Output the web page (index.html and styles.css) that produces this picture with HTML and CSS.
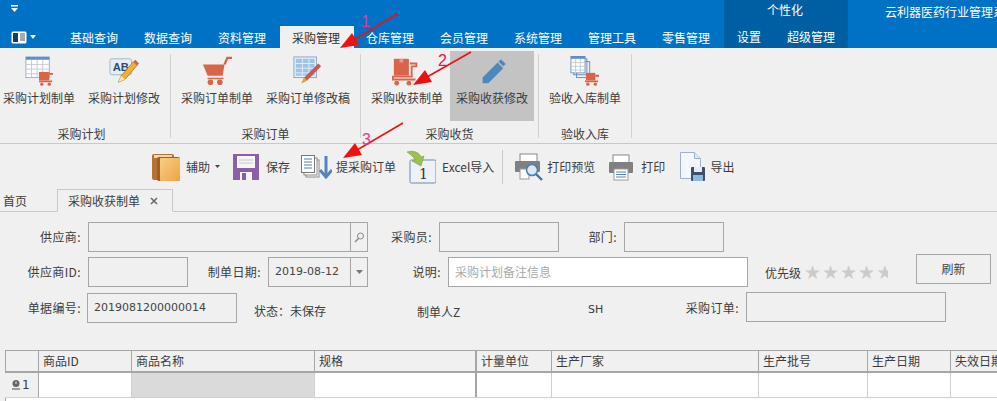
FILE: index.html
```html
<!DOCTYPE html>
<html lang="zh">
<head>
<meta charset="utf-8">
<title>采购收获制单</title>
<link rel="stylesheet" href="styles.css">
</head>
<body>
<div class="page">
  <header class="topbar">
    <div class="top-left">
      <div class="qat">
        <svg width="10" height="8" viewBox="0 0 10 8"><rect x="1" y="0" width="7" height="1.5" fill="#fff"/><path d="M1 3h7L4.5 7z" fill="#fff"/></svg>
      </div>
      <nav class="tabs">
        <div class="filemenu">
          <svg width="16" height="13" viewBox="0 0 16 13"><rect x="0.5" y="0.5" width="15" height="12" rx="1.5" fill="#fff"/><rect x="2" y="2" width="5" height="9" fill="#0f3f6b"/><path d="M9 3h5M9 5h5M9 7h5M9 9h5" stroke="#555" stroke-width="1"/></svg>
          <svg class="caret" width="6" height="4" viewBox="0 0 6 4"><path d="M0 0h6L3 4z" fill="#fff"/></svg>
        </div>
        <span class="tab">基础查询</span>
        <span class="tab">数据查询</span>
        <span class="tab">资料管理</span>
        <span class="tab active">采购管理</span>
        <span class="tab">仓库管理</span>
        <span class="tab">会员管理</span>
        <span class="tab">系统管理</span>
        <span class="tab">管理工具</span>
        <span class="tab">零售管理</span>
      </nav>
    </div>
    <div class="context">
      <div class="context-title">个性化</div>
      <div class="context-tabs"><span>设置</span><span>超级管理</span></div>
    </div>
    <div class="app-title">云利器医药行业管理系统</div>
  </header>

  <section class="ribbon">
    <div class="group first">
      <div class="group-btns">
        <div class="rbtn">
          <svg class="ricon" width="32" height="30" viewBox="0 0 32 32"><rect x="2" y="1" width="25" height="22" fill="#fff" stroke="#8fb0d4"/><rect x="2" y="1" width="25" height="3" fill="#5b8fc7"/><path d="M2 9h25M2 14h25M2 19h25M8 4v19M14 4v19M20 4v19" stroke="#c9c9c9"/><rect x="16" y="17" width="11" height="9" fill="#d9644a"/><path d="M27 19h4M16 27h14" stroke="#d9644a" stroke-width="2"/><circle cx="19" cy="30" r="1.8" fill="#d9644a"/><circle cx="27" cy="30" r="1.8" fill="#d9644a"/></svg>
          <span class="rlabel">采购计划制单</span>
        </div>
        <div class="rbtn">
          <svg class="ricon" width="32" height="30" viewBox="0 0 32 32"><rect x="1" y="3" width="23" height="17" rx="2" fill="#e8edf5" stroke="#9fb2cc"/><text class="ab" x="4" y="16">AB</text><path d="M10 28l3-7L26 6l4 4L17 25z" fill="#f0b232" stroke="#8a6a2a" stroke-width=".7"/><path d="M26 6l2-2 4 4-2 2z" fill="#d85c4a"/><path d="M10 28l3-7 4 4z" fill="#f5dfb5"/></svg>
          <span class="rlabel">采购计划修改</span>
        </div>
      </div>
      <div class="group-title">采购计划</div>
    </div>
    <div class="group">
      <div class="group-btns">
        <div class="rbtn">
          <svg class="ricon" width="32" height="30" viewBox="0 0 32 32"><path d="M1 9h23l-2 12H6z" fill="#d9644a"/><path d="M24 9l3-7h5" fill="none" stroke="#d9644a" stroke-width="2.4"/><path d="M6 24h17" stroke="#d9644a" stroke-width="1.6"/><circle cx="9" cy="28" r="3" fill="#d9644a"/><circle cx="19" cy="28" r="3" fill="#d9644a"/></svg>
          <span class="rlabel">采购订单制单</span>
        </div>
        <div class="rbtn">
          <svg class="ricon" width="32" height="30" viewBox="0 0 32 32"><rect x="1" y="1" width="24" height="22" fill="#e9eef6" stroke="#8da3bf"/><rect x="3" y="3" width="20" height="18" fill="#9dc3e6"/><path d="M3 8h20M3 13h20M3 18h20M10 3v18M17 3v18" stroke="#e5eef8"/><path d="M9 29l3-6L27 8l3 3-15 15z" fill="#c9574f"/><path d="M9 29l3-6 3 3z" fill="#d8a94c"/></svg>
          <span class="rlabel">采购订单修改稿</span>
        </div>
      </div>
      <div class="group-title">采购订单</div>
    </div>
    <div class="group">
      <div class="group-btns">
        <div class="rbtn">
          <svg class="ricon" width="32" height="30" viewBox="0 0 32 32"><rect x="2" y="3" width="16" height="18" fill="#d9644a"/><rect x="8" y="3" width="4" height="4" fill="#eb9a85"/><path d="M19 8h7v3h-5v11H1v3h24" fill="none" stroke="#d9644a" stroke-width="2"/><circle cx="5" cy="29" r="2.5" fill="#d9644a"/><circle cx="18" cy="29" r="2.5" fill="#d9644a"/></svg>
          <span class="rlabel">采购收获制单</span>
        </div>
        <div class="rbtn selected">
          <svg class="ricon" width="32" height="30" viewBox="0 0 32 32"><path d="M6 29v-6L22 7l6 6-16 16z" fill="#4f86bd"/><path d="M23 6l2.500-2.500 5 5L28 11z" fill="#4f86bd"/></svg>
          <span class="rlabel">采购收获修改</span>
        </div>
      </div>
      <div class="group-title">采购收货</div>
    </div>
    <div class="group">
      <div class="group-btns">
        <div class="rbtn">
          <svg class="ricon" width="32" height="30" viewBox="0 0 32 32"><rect x="7" y="6" width="14" height="17" fill="none" stroke="#5b8fc7"/><rect x="4" y="3" width="14" height="17" fill="none" stroke="#5b8fc7"/><rect x="1" y="0" width="15" height="18" fill="#fff" stroke="#6f94bd"/><rect x="1" y="0" width="15" height="3" fill="#5b8fc7"/><path d="M1 7h15M1 11h15M1 15h15M6 3v15M11 3v15" stroke="#c9c9c9"/><rect x="17" y="18" width="10" height="8" fill="#d9644a"/><path d="M27 21h4M16 27h14" stroke="#d9644a" stroke-width="2"/><circle cx="19" cy="30" r="1.8" fill="#d9644a"/><circle cx="27" cy="30" r="1.8" fill="#d9644a"/></svg>
          <span class="rlabel">验收入库制单</span>
        </div>
      </div>
      <div class="group-title">验收入库</div>
    </div>
  </section>

  <section class="toolbar">
    <div class="tool t-help">
      <svg width="28" height="28" viewBox="0 0 28 28"><defs><linearGradient id="bk" x1="0" y1="0" x2="1" y2="1"><stop offset="0" stop-color="#f7cf86"/><stop offset="1" stop-color="#eda444"/></linearGradient></defs><rect x="0" y="1" width="22" height="26" rx="2" fill="#b5713a"/><rect x="2" y="2" width="18" height="3" fill="#f0d7a8"/><rect x="5" y="4" width="23" height="24" rx="2" fill="#a75c22"/><rect x="8" y="5" width="20" height="23" rx="1" fill="url(#bk)"/></svg>
      <span>辅助</span>
      <svg class="tcaret" width="5" height="3" viewBox="0 0 5 3"><path d="M0 0h5L2.500 3z" fill="#444"/></svg>
    </div>
    <div class="tool t-save">
      <svg width="26" height="26" viewBox="0 0 26 26"><path d="M0 0h26v26H0z" fill="#8a5fa8"/><rect x="4" y="2" width="18" height="12" fill="#f5f5f5"/><path d="M6 6h14M6 9h14" stroke="#c8c8c8"/><rect x="7" y="18" width="12" height="8" fill="#f5f5f5"/><rect x="9" y="19" width="4" height="7" fill="#8a5fa8"/></svg>
      <span>保存</span>
    </div>
    <div class="tool t-pull">
      <svg width="31" height="24" viewBox="0 0 31 24"><rect x="5" y="5" width="13" height="17" fill="#fff" stroke="#888"/><rect x="3" y="3" width="13" height="17" fill="#fff" stroke="#888"/><rect x="0.500" y="0.500" width="13" height="17" fill="#fff" stroke="#777"/><path d="M3 4h8M3 7h8M3 10h8M3 13h8" stroke="#4f7fb0"/><path d="M25 1v19" stroke="#4f86bd" stroke-width="3"/><path d="M19 15l6 7 6-7" fill="none" stroke="#4f86bd" stroke-width="3"/></svg>
      <span>提采购订单</span>
    </div>
    <div class="tool t-excel">
      <svg width="29" height="34" viewBox="0 0 29 34"><rect x="3" y="10" width="26" height="23" rx="1.500" fill="#eef2f8" stroke="#6f86b0"/><text class="one" x="12" y="29">1</text><path d="M0 2c6-2 12 0 14 5l3-1-3 10-9-5 3-1C7 7 4 5 0 2z" fill="#9cc24e" stroke="#6f8f2f" stroke-width=".5"/></svg>
      <span class="latin">Excel导入</span>
    </div>
    <div class="tsep"></div>
    <div class="tool t-preview">
      <svg width="28" height="28" viewBox="0 0 28 28"><rect x="5" y="1" width="17" height="8" fill="#fff" stroke="#888"/><rect x="0" y="8" width="25" height="11" rx="1" fill="#808080"/><rect x="5" y="16" width="9" height="10" fill="#fff" stroke="#999"/><circle cx="17" cy="17" r="5.500" fill="#dfe8f2" stroke="#4a7fb0" stroke-width="1.600"/><path d="M21 21l6 6" stroke="#3f76ad" stroke-width="2.400"/></svg>
      <span>打印预览</span>
    </div>
    <div class="tool t-print">
      <svg width="24" height="27" viewBox="0 0 24 27"><rect x="4" y="1" width="16" height="8" fill="#fff" stroke="#888"/><rect x="0" y="8" width="24" height="11" rx="1" fill="#808080"/><rect x="5" y="15" width="14" height="11" fill="#fff" stroke="#999"/><path d="M7 18h10M7 20.500h10M7 23h10" stroke="#4f86bd"/></svg>
      <span>打印</span>
    </div>
    <div class="tool t-export">
      <svg width="25" height="30" viewBox="0 0 25 30"><path d="M0.500 0.500h14l6 6v20h-20z" fill="#f4f6fb" stroke="#9fb0cc"/><path d="M14.500.5v6h6" fill="#dfe6f2" stroke="#9fb0cc"/><rect x="11" y="15" width="14" height="14" rx="1" fill="#3f4f6b"/><rect x="14" y="15" width="8" height="5" fill="#e8edf5"/><rect x="13" y="23" width="10" height="6" fill="#8fb8de"/></svg>
      <span>导出</span>
    </div>
  </section>

  <section class="doctabs">
    <span class="doctab-home">首页</span>
    <div class="doctab">
      <span>采购收获制单</span>
      <svg width="8" height="8" viewBox="0 0 8 8"><path d="M1 1l6 6M7 1L1 7" stroke="#666" stroke-width="1.500"/></svg>
    </div>
  </section>

  <section class="form">
    <div class="frow r1">
      <label class="lb w81">供应商:</label>
      <div class="input w280 combo"><i></i><b class="addon">
        <svg width="11" height="11" viewBox="0 0 11 11"><circle cx="6.500" cy="4" r="3" fill="none" stroke="#888"/><path d="M4.500 6.500L1 10" stroke="#888" stroke-width="1.500"/></svg></b></div>
      <label class="lb w64">采购员:</label>
      <div class="input w120"></div>
      <label class="lb w58">部门:</label>
      <div class="input w100"></div>
    </div>
    <div class="frow r2">
      <label class="lb w81">供应商ID:</label>
      <div class="input w100"></div>
      <label class="lb w73">制单日期:</label>
      <div class="input w100 combo"><i class="num">2019-08-12</i><b class="addon">
        <svg width="7" height="4" viewBox="0 0 7 4"><path d="M0 0h7L3.500 4z" fill="#777"/></svg></b></div>
      <label class="lb w73">说明:</label>
      <div class="input w300 white">采购计划备注信息</div>
      <span class="prio">优先级</span>
      <span class="stars">★★★★★</span>
      <button class="refresh" type="button">刷新</button>
    </div>
    <div class="frow r3">
      <label class="lb w81">单据编号:</label>
      <div class="input w150 num code">2019081200000014</div>
      <span class="status">状态：未保存</span>
      <span class="maker">制单人Z</span>
      <span class="sh">SH</span>
      <label class="lb w83 order-lb">采购订单:</label>
      <div class="input w200 order"></div>
    </div>
  </section>

  <section class="grid">
    <div class="ghead">
      <div></div><div>商品ID</div><div>商品名称</div><div>规格</div><div>计量单位</div><div>生产厂家</div><div>生产批号</div><div>生产日期</div><div>失效日期</div>
    </div>
    <div class="grow">
      <div class="rowhead">
        <svg width="8" height="10" viewBox="0 0 8 10"><circle cx="4" cy="3.500" r="3.500" fill="#666"/><path d="M4 1.500v2.500" stroke="#eee"/><path d="M0 9h8" stroke="#666" stroke-width="1.200"/></svg>
        <span>1</span>
      </div>
      <div></div><div class="gray"></div><div></div><div></div><div></div><div></div><div></div><div></div>
    </div>
  </section>

  <svg class="marks" width="997" height="401" viewBox="0 0 997 401">
    <g fill="#f01010">
      <path d="M340 48l12-15 7 12z"/>
      <path d="M413 85l12-15 7 12z"/>
      <path d="M343 158l12-15 7 12z"/>
    </g>
    <g stroke="#f01010" stroke-width="1.600" fill="none">
      <path d="M397 14L354 40"/>
      <path d="M471 52L427 77"/>
      <path d="M403 123L357 150"/>
    </g>
    <text class="mark pink" x="361" y="27">1</text>
    <text class="mark red" x="438" y="66">2</text>
    <text class="mark pink" x="362" y="145">3</text>
  </svg>
</div>
</body>
</html>
```
FILE: styles.css
```css
* { box-sizing: border-box; }
html, body { margin: 0; padding: 0; }
body {
  width: 997px;
  height: 401px;
  overflow: hidden;
  background: #f0f0f0;
  color: #3c3c3c;
  font: 12px/16px "Noto Sans CJK SC", "Liberation Sans", sans-serif;
}
.page { position: relative; width: 997px; height: 401px; overflow: hidden; display: flex; flex-direction: column; }

/* title and tab strip */
.topbar { display: flex; height: 48px; flex: none; background: #0072c6; color: #fff; }
.top-left { width: 724px; flex: none; display: flex; flex-direction: column; }
.qat { height: 26px; padding: 5px 0 0 10px; }
.qat svg { display: block; }
.tabs { display: flex; height: 22px; }
.filemenu { width: 58px; display: flex; align-items: flex-start; gap: 3px; padding: 0 0 0 11px; margin-top: 5px; }
.filemenu .caret { margin-top: 4px; }
.tab { width: 74px; text-align: center; line-height: 23px; padding-right: 2px; white-space: nowrap; flex: none; }
.tab.active { background: #f0f0f0; color: #333; }
.context { width: 124px; flex: none; background: #005fa3; display: flex; flex-direction: column; }
.context-title { height: 26px; text-align: center; line-height: 19px; padding-right: 2px; }
.context-tabs { display: flex; line-height: 23px; padding-left: 13px; gap: 26px; }
.app-title { padding: 3px 0 0 37px; white-space: nowrap; overflow: hidden; line-height: 18px; flex: 1; min-width: 0; }

/* ribbon */
.ribbon { display: flex; height: 96px; flex: none; border-bottom: 1px solid #c8c8c8; padding-top: 3px; margin-left: -7px; }
.group { display: flex; flex-direction: column; padding: 0 5px 0 4px; position: relative; }
.group::after { content: ""; position: absolute; right: 0; top: 3px; bottom: 5px; width: 1px; background: #d0d0d0; }
.group-btns { display: flex; gap: 1px; height: 70px; }
.rbtn { display: flex; flex-direction: column; align-items: center; padding: 5px 6px 0; height: 70px; }
.ricon { display: block; flex: none; }
.rlabel { margin-top: 4px; white-space: nowrap; line-height: 16px; }
.rbtn.selected { background: #c3c3c3; }
.group-title { text-align: center; line-height: 16px; margin-top: 5px; }
.ab { font: bold 12px "Liberation Sans", sans-serif; fill: #2f4a78; }

/* toolbar */
.toolbar { display: flex; align-items: center; height: 46px; flex: none; padding-left: 152px; }
.tool { display: flex; align-items: center; gap: 6px; white-space: nowrap; }
.tool svg { display: block; flex: none; }
.tool .tcaret { margin-left: -1px; margin-top: -2px; }
.t-help { margin-right: 13px; }
.t-save { gap: 7px; margin-right: 11px; }
.t-pull { gap: 4px; margin-right: 11px; }
.t-excel { margin-right: 8px; }
.tsep { width: 1px; height: 34px; background: #c8c8c8; margin-right: 12px; }
.t-preview { gap: 4px; margin-right: 14px; }
.t-print { gap: 8px; margin-right: 15px; }
.t-export { gap: 5px; }
.one { font: 14px "DejaVu Serif", serif; fill: #333; }

/* document tabs */
.doctabs { display: flex; align-items: flex-end; height: 22px; flex: none; border-bottom: 1px solid #c8c8c8; padding-left: 3px; }
.doctab-home { width: 54px; line-height: 20px; }
.doctab { width: 116px; height: 23px; margin-bottom: -1px; background: #f0f0f0; border: 1px solid #c8c8c8; border-bottom-color: #f0f0f0; display: flex; align-items: center; gap: 10px; padding-left: 10px; white-space: nowrap; }

/* form */
.form { flex: none; height: 138px; padding-top: 10px; display: flex; flex-direction: column; }
.frow { display: flex; align-items: center; height: 30px; }
.r2 { margin-top: 5px; }
.r3 { margin-top: 6px; }
.lb { display: block; text-align: right; flex: none; line-height: 16px; letter-spacing: 0.4px; white-space: nowrap; }
.w81 { width: 81px; } .w83 { width: 83px; }
.w64 { width: 64px; } .w58 { width: 58px; } .w73 { width: 73px; }
.input { height: 30px; border: 1px solid #a6a6a6; margin-left: 7px; flex: none; }
.r3 .code { margin-left: 6px; }
.w100 { width: 100px; } .w120 { width: 120px; } .w150 { width: 150px; }
.w200 { width: 200px; } .w280 { width: 280px; } .w300 { width: 300px; }
.combo { display: flex; }
.combo i { flex: 1; font-style: normal; }
.addon { width: 17px; border-left: 1px solid #a6a6a6; display: flex; align-items: center; justify-content: center; font-weight: normal; }
.num { font: 11px/28px "DejaVu Sans", sans-serif; color: #444; padding-left: 6px; }
.combo .num { line-height: 28px; }
.white { background: #fff; color: #aaa; padding-left: 6px; line-height: 28px; }
.prio { margin-left: 17px; white-space: nowrap; margin-top: 2px; }
.stars { margin-left: 3px; width: 84px; font: 19px/20px "DejaVu Sans", sans-serif; color: #cbcbcb; letter-spacing: 1px; white-space: nowrap; overflow: hidden; }
.refresh { margin: -6px 0 0 28px; width: 75px; height: 30px; background: #f0f0f0; border: 1px solid #a6a6a6; font: inherit; color: #444; padding: 0; }
.status { margin-left: 17px; margin-top: 6px; white-space: nowrap; width: 72px; }
.maker { margin-left: 91px; margin-top: 8px; white-space: nowrap; width: 43px; }
.sh { margin-left: 128px; margin-top: 4px; font: 11px/16px "DejaVu Sans", sans-serif; width: 15px; }
.order-lb { margin-left: 53px; margin-top: -1px; }
.order { margin-top: -2px; }

/* data grid */
.grid { flex: 1; margin-left: 5px; background: #fff; border-top: 1px solid #a6a6a6; border-left: 1px solid #a6a6a6; min-height: 0; }
.ghead, .grow { display: grid; grid-template-columns: 33px 93px 183px 162px 75px 207px 109px 83px 60px; }
.ghead { height: 20px; background: #f0f0f0; border-bottom: 2px solid #a6a6a6; box-sizing: content-box; }
.ghead > div { border-right: 1px solid #a6a6a6; padding-left: 4px; line-height: 20px; white-space: nowrap; overflow: hidden; }
.grow { height: 25px; border-bottom: 1px solid #d0d0d0; margin-left: -1px; grid-template-columns: 34px 93px 183px 162px 75px 207px 109px 83px 60px; }
.grow > div { border-right: 1px solid #d0d0d0; }
.ghead > div:nth-child(4), .grow > div:nth-child(4) { border-right: 2px solid #a6a6a6; }
.grow > .gray { background: #dadada; }
.rowhead { background: #f0f0f0; display: flex; align-items: center; gap: 2px; padding-left: 7px; font: 12px "DejaVu Sans", sans-serif; border-right-color: #a6a6a6 !important; }
.rowhead svg { display: block; }

/* hand-drawn annotations over the screenshot */
.marks { position: absolute; left: 0; top: 0; pointer-events: none; }
.mark { font: 16px "Liberation Sans", sans-serif; }
.pink { fill: #e8368f; }
.red { fill: #f01040; }
```
